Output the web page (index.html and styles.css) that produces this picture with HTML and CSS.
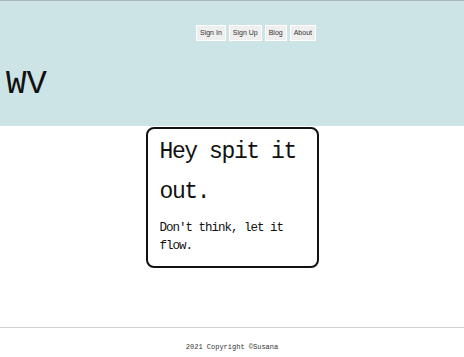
FILE: index.html
```html
<!DOCTYPE html>
<html lang="en">
<head>
    <meta charset="UTF-8">
    <meta name="viewport" content="width=device-width, initial-scale=1.0">
    <title>WV</title>
    <link rel="stylesheet" href="styles.css">
</head>
<body>
    <header class="header">
        <nav class="nav">
            <button type="button" class="nav-btn">Sign In</button>
            <button type="button" class="nav-btn">Sign Up</button>
            <button type="button" class="nav-btn">Blog</button>
            <button type="button" class="nav-btn">About</button>
        </nav>
        <div class="logo">WV</div>
    </header>

    <main class="main">
        <div class="card">
            <h1>Hey spit it out.</h1>
            <p>Don't think, let it flow.</p>
        </div>
    </main>

    <footer class="footer">
        <p>2021 Copyright ©Susana</p>
    </footer>
</body>
</html>
```

FILE: styles.css
```css
body {
    margin: 0;
    font-family: 'Liberation Mono', 'Courier New', monospace;
    color: #111;
    background: white;
}
.header {
    background: #cce4e6;
    border-top: 1px solid #a9b9ba;
    padding: 24px 6px 22px;
}
.nav {
    display: flex;
    justify-content: center;
    gap: 3px;
    padding-left: 48px;
}
.nav-btn {
    font-family: 'Liberation Sans', Arial, sans-serif;
    font-size: 7px;
    line-height: 8px;
    height: 16px;
    padding: 3px 3px;
    background: #efefef;
    color: #333;
    border: 1px solid white;
    border-radius: 0;
    cursor: pointer;
}
.logo {
    margin-top: 23px;
    font-size: 34px;
    line-height: 40px;
}
.main {
    display: flex;
    justify-content: center;
    padding-top: 1px;
}
.card {
    width: 145px;
    padding: 3px 12px 11px;
    border: 2px solid #111;
    border-radius: 8px;
}
.card h1 {
    margin: 0;
    font-size: 23px;
    font-weight: normal;
    line-height: 40px;
    letter-spacing: -1.4px;
}
.card p {
    margin: 7px 0 0;
    font-size: 12.5px;
    line-height: 18px;
    letter-spacing: -1px;
}
.footer {
    margin-top: 59px;
    border-top: 1px solid #d0d0d0;
    text-align: center;
}
.footer p {
    margin: 14px 0 0;
    font-size: 7px;
    line-height: 10px;
    color: #333;
}
```
